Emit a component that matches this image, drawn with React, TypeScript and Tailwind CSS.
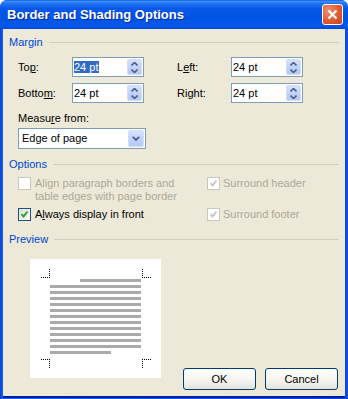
import React from "react";

const Chevron = ({ dir }: { dir: "up" | "down" }) => (
  <svg width="7" height="4" viewBox="0 0 7 4" className="block">
    <path
      d={dir === "up" ? "M0.5 3.5 L3.5 0.5 L6.5 3.5" : "M0.5 0.5 L3.5 3.5 L6.5 0.5"}
      fill="none"
      stroke="#4d6185"
      strokeWidth="1.6"
    />
  </svg>
);

const SpinBox = ({ value, selected }: { value: string; selected?: boolean }) => (
  <div className="flex h-[20px] w-[72px] items-center border border-[#7f9db9] bg-white pl-[1px] pr-[1px]">
    <div className="flex-1 leading-[15px]">
      <span className={selected ? "bg-[#316ac5] pr-[1px] text-white" : ""}>{value}</span>
    </div>
    <div className="flex h-[16px] w-[15px] flex-col items-center justify-center gap-[3px] rounded-[2px] border border-[#d3defb] bg-[linear-gradient(180deg,#d6e1fc_0%,#c1d3fb_50%,#b4c8f6_100%)]">
      <Chevron dir="up" />
      <Chevron dir="down" />
    </div>
  </div>
);

const GroupHeader = ({ label }: { label: string }) => (
  <div className="flex items-center gap-[6px] leading-[14px]">
    <span className="text-[#0046d5]">{label}</span>
    <div className="h-px flex-1 bg-[#d0d0bf]" />
  </div>
);

const Checkbox = ({ checked, disabled }: { checked?: boolean; disabled?: boolean }) => (
  <div
    className={`flex h-[13px] w-[13px] shrink-0 items-center justify-center border ${
      disabled ? "border-[#cac8bb] bg-white" : "border-[#1c5180] bg-[linear-gradient(135deg,#dcdcd7_0%,#ffffff_100%)]"
    }`}
  >
    {checked && (
      <svg width="9" height="9" viewBox="0 0 9 9">
        <path
          d="M1.5 4 L3.5 6.5 L7.5 1.5"
          fill="none"
          stroke={disabled ? "#cac8bb" : "#21a121"}
          strokeWidth="2"
        />
      </svg>
    )}
  </div>
);

const XpButton = ({ label }: { label: string }) => (
  <div className="flex h-[22px] w-[73px] items-center justify-center rounded-[3px] border border-[#003c74] bg-[linear-gradient(180deg,#ffffff_0%,#f4f3ee_60%,#e3e2da_100%)] text-black">
    {label}
  </div>
);

const Preview = () => {
  const lines = Array.from({ length: 13 }, (_, i) => i);
  return (
    <div className="h-[119px] w-[131px] bg-white">
      <svg width="131" height="119" viewBox="0 0 131 119" className="block">
        <g stroke="#000" strokeWidth="1" strokeDasharray="1 1" fill="none">
          <path d="M11 18.5 H20 M19.5 10 V19" />
          <path d="M112.5 10 V19 M112 18.5 H121" />
          <path d="M11 100.5 H20 M19.5 100 V109" />
          <path d="M112.5 100 V109 M112 100.5 H121" />
        </g>
        {lines.map((i) => {
          const x = i === 0 ? 50 : 20;
          const w = i === 0 ? 61 : i === 12 ? 61 : 91;
          return <rect key={i} x={x} y={20 + i * 6} width={w} height={3} fill="#aaaaaa" />;
        })}
      </svg>
    </div>
  );
};

export default function App() {
  return (
    <div className="flex h-[399px] w-[348px] flex-col overflow-hidden rounded-t-[7px] bg-[linear-gradient(90deg,#0a3fd6_0%,#166aee_1%,#0a4be0_100%)] font-['Liberation_Sans',sans-serif] text-[11px] text-black">
      <div className="flex h-[29px] shrink-0 items-center bg-[linear-gradient(180deg,#0b5de6_0%,#3d8ef8_5%,#2173f2_12%,#0858e8_30%,#0054e3_65%,#0259eb_88%,#0048dc_100%)] pl-[7px] pr-[5px]">
        <span className="flex-1 text-[13px] font-bold text-white [text-shadow:1px_1px_0_#0c2b9a]">
          Border and Shading Options
        </span>
        <div className="flex h-[21px] w-[21px] items-center justify-center rounded-[3px] border border-white bg-[radial-gradient(circle_at_30%_30%,#ee9274_0%,#e05a30_55%,#c8401a_100%)]">
          <svg width="11" height="11" viewBox="0 0 11 11">
            <path d="M1.5 1.5 L9.5 9.5 M9.5 1.5 L1.5 9.5" stroke="#fff" strokeWidth="2.2" />
          </svg>
        </div>
      </div>

      <div className="mx-[3px] mb-[3px] flex flex-1 flex-col bg-[#ece9d8] px-[6px] pt-[6px] shadow-[0_2px_0_#001ea0]">
        <GroupHeader label="Margin" />

        <div className="mt-[8px] flex items-center pl-[9px]">
          <span className="w-[54px]">
            To<u>p</u>:
          </span>
          <SpinBox value="24 pt" selected />
          <span className="ml-[33px] w-[54px]">
            L<u>e</u>ft:
          </span>
          <SpinBox value="24 pt" />
        </div>
        <div className="mt-[6px] flex items-center pl-[9px]">
          <span className="w-[54px]">
            Botto<u>m</u>:
          </span>
          <SpinBox value="24 pt" />
          <span className="ml-[33px] w-[54px]">
            Ri<u>g</u>ht:
          </span>
          <SpinBox value="24 pt" />
        </div>

        <div className="mt-[8px] pl-[9px] leading-[14px]">
          Measu<u>r</u>e from:
        </div>
        <div className="ml-[9px] mt-[3px] flex h-[21px] w-[128px] items-center border border-[#7f9db9] bg-white pl-[3px] pr-[1px]">
          <span className="flex-1">Edge of page</span>
          <div className="flex h-[17px] w-[16px] items-center justify-center rounded-[2px] border border-[#d3defb] bg-[linear-gradient(180deg,#d6e1fc_0%,#c1d3fb_50%,#b4c8f6_100%)]">
            <svg width="8" height="5" viewBox="0 0 8 5">
              <path d="M0.8 0.8 L4 4 L7.2 0.8" fill="none" stroke="#4d6185" strokeWidth="1.8" />
            </svg>
          </div>
        </div>

        <div className="mt-[8px]">
          <GroupHeader label="Options" />
        </div>
        <div className="mt-[6px] flex pl-[9px] leading-[13px]">
          <div className="flex w-[189px] gap-[4px] text-[#aca899]">
            <Checkbox disabled />
            <span>
              Align paragraph borders and
              <br />
              table edges with page border
            </span>
          </div>
          <div className="flex gap-[3px] text-[#aca899]">
            <Checkbox checked disabled />
            <span>Surround header</span>
          </div>
        </div>
        <div className="mt-[5px] flex pl-[9px] leading-[13px]">
          <div className="flex w-[189px] gap-[4px]">
            <Checkbox checked />
            <span>
              A<u>l</u>ways display in front
            </span>
          </div>
          <div className="flex gap-[3px] text-[#aca899]">
            <Checkbox checked disabled />
            <span>Surround footer</span>
          </div>
        </div>

        <div className="mt-[11px]">
          <GroupHeader label="Preview" />
        </div>
        <div className="mt-[13px] flex h-[131px] pl-[21px]">
          <div className="self-start">
            <Preview />
          </div>
          <div className="ml-auto flex gap-[9px] self-end pr-[1px]">
            <XpButton label="OK" />
            <XpButton label="Cancel" />
          </div>
        </div>
      </div>
    </div>
  );
}
